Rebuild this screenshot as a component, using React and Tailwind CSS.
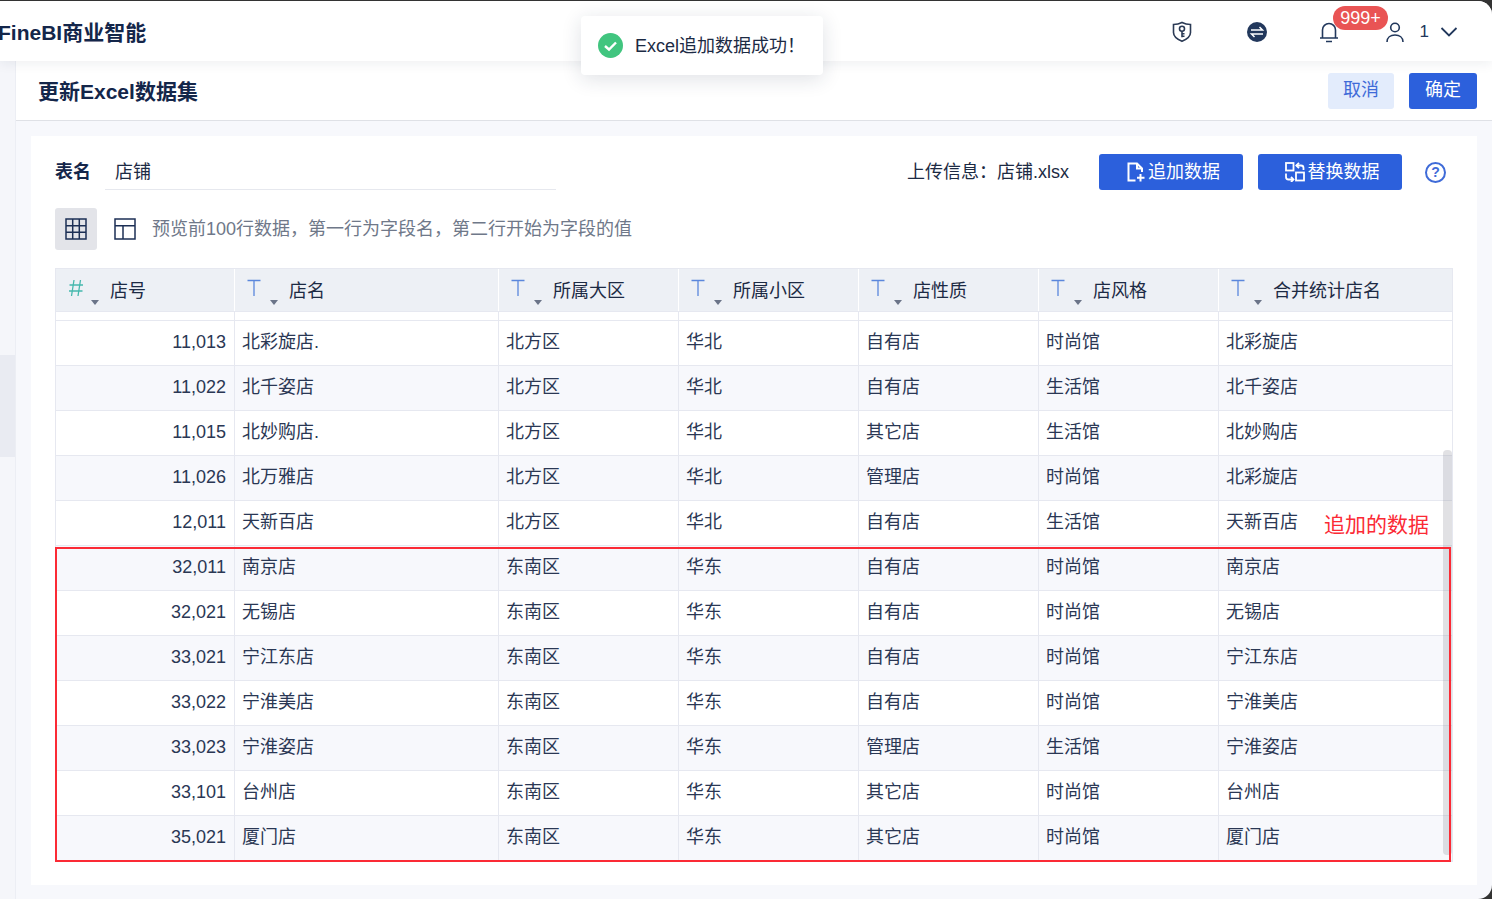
const font = "font-['Liberation_Sans','Noto_Sans_CJK_SC',sans-serif]";

const columns = [
  { name: '店号', type: 'num', width: 'w-[179px]' },
  { name: '店名', width: 'w-[264px]' },
  { name: '所属大区', width: 'w-[180px]' },
  { name: '所属小区', width: 'w-[180px]' },
  { name: '店性质', width: 'w-[180px]' },
  { name: '店风格', width: 'w-[180px]' },
  { name: '合并统计店名', width: 'flex-1' },
];

const rows = [
  ['11,013', '北彩旋店.', '北方区', '华北', '自有店', '时尚馆', '北彩旋店'],
  ['11,022', '北千姿店', '北方区', '华北', '自有店', '生活馆', '北千姿店'],
  ['11,015', '北妙购店.', '北方区', '华北', '其它店', '生活馆', '北妙购店'],
  ['11,026', '北万雅店', '北方区', '华北', '管理店', '时尚馆', '北彩旋店'],
  ['12,011', '天新百店', '北方区', '华北', '自有店', '生活馆', '天新百店'],
  ['32,011', '南京店', '东南区', '华东', '自有店', '时尚馆', '南京店'],
  ['32,021', '无锡店', '东南区', '华东', '自有店', '时尚馆', '无锡店'],
  ['33,021', '宁江东店', '东南区', '华东', '自有店', '时尚馆', '宁江东店'],
  ['33,022', '宁淮美店', '东南区', '华东', '自有店', '时尚馆', '宁淮美店'],
  ['33,023', '宁淮姿店', '东南区', '华东', '管理店', '生活馆', '宁淮姿店'],
  ['33,101', '台州店', '东南区', '华东', '其它店', '时尚馆', '台州店'],
  ['35,021', '厦门店', '东南区', '华东', '其它店', '时尚馆', '厦门店'],
];

function ShieldKey() {
  return (
    <svg width="20" height="22" viewBox="0 0 20 22" fill="none" stroke="#2b3a55" strokeWidth="1.6">
      <path d="M10 1.500c2.700 1.400 5.500 2 8.500 2v8c0 4-3.700 6.800-8.500 8.800-4.800-2-8.500-4.800-8.500-8.800v-8c3 0 5.800-.6 8.500-2z" />
      <circle cx="10" cy="7.800" r="2.500" />
      <path d="M10 10.300v6M10 12.800h2.500M10 15.300h2.500" />
    </svg>
  );
}

function SwitchCircle() {
  return (
    <svg width="20" height="20" viewBox="0 0 20 20" fill="none">
      <circle cx="10" cy="10" r="10" fill="#22385c" />
      <path d="M4 8h11.500l-3-3M16 12H4.500l3 3" stroke="#fff" strokeWidth="1.500" />
    </svg>
  );
}

function Bell() {
  return (
    <svg width="22" height="24" viewBox="0 0 22 24" fill="none" stroke="#22385c" strokeWidth="1.600">
      <path d="M2 18h18M4.500 18v-8a6.500 6.500 0 0 1 13 0v8" />
      <path d="M8 21.500h6" />
    </svg>
  );
}

function User() {
  return (
    <svg width="20" height="22" viewBox="0 0 20 22" fill="none" stroke="#22385c" strokeWidth="1.600">
      <circle cx="10" cy="6.500" r="4.300" />
      <path d="M2 21c0-4.500 3.500-7 8-7s8 2.500 8 7" />
    </svg>
  );
}

function FileAdd() {
  return (
    <svg width="20" height="20" viewBox="0 0 20 20" fill="none" stroke="#fff" strokeWidth="2">
      <path d="M9.500 18.500H2.500V1.500h8.500l5 5v3.500" />
      <path d="M11 1.500v5h5" />
      <path d="M14.500 12v7.500M11 15.700h7.500" />
    </svg>
  );
}

function Replace() {
  return (
    <svg width="20" height="20" viewBox="0 0 20 20" fill="none" stroke="#fff" strokeWidth="1.800">
      <rect x="1" y="1" width="7.500" height="7.500" />
      <rect x="11" y="10.500" width="8" height="8" />
      <path d="M1 11.500v3.500c0 1.500 1 2.500 2.500 2.500H8" />
      <path d="M6 15l2.500 2.500L6 20" />
      <path d="M11.500 3.500H16c1.500 0 2.500 1 2.500 2.500v2" />
      <path d="M14 .8l-2.700 2.700 2.700 2.700" />
    </svg>
  );
}

function GridIcon() {
  return (
    <svg width="22" height="22" viewBox="0 0 22 22" fill="none" stroke="#1c2f55" strokeWidth="1.500">
      <rect x="1" y="1" width="20" height="20" />
      <path d="M7.700 1v20M14.300 1v20M1 7.700h20M1 14.300h20" />
    </svg>
  );
}

function TableIcon() {
  return (
    <svg width="22" height="22" viewBox="0 0 22 22" fill="none" stroke="#1c2f55" strokeWidth="1.500">
      <rect x="1" y="1" width="20" height="20" />
      <path d="M1 7.700h20M9 7.700V21" />
    </svg>
  );
}

function HashIcon() {
  return (
    <svg className="absolute left-[12px] top-[10px]" width="16" height="18" viewBox="0 0 16 18" fill="none" stroke="#45b8ad" strokeWidth="1.300">
      <path d="M6 1L3.500 17M12.500 1L10 17M1.500 6H15M1 12h13.500" />
    </svg>
  );
}

function TypeIcon() {
  return (
    <svg className="absolute left-[12px] top-[10px]" width="14" height="18" viewBox="0 0 14 18" fill="none" stroke="#5b87dc" strokeWidth="1.300">
      <path d="M.5 1.500h13M7 1.500V17" />
    </svg>
  );
}

function Caret() {
  return <span className="absolute left-[35px] top-[31px] h-0 w-0 border-x-[4px] border-t-[5px] border-x-transparent border-t-[#6b7488]" />;
}

function HeaderCell({ col }) {
  return (
    <div className={`${col.width} relative flex h-[42px] shrink-0 items-center border-r border-white last:border-r-0 pl-[54px] pt-[3px] text-[18px] text-[#1c2a44]`}>
      {col.type === 'num' ? <HashIcon /> : <TypeIcon />}
      <Caret />
      {col.name}
    </div>
  );
}

function Row({ row, i }) {
  return (
    <div className={`flex h-[45px] border-b border-[#e6e8f0] ${i % 2 === 1 ? 'bg-[#f7f8fc]' : 'bg-white'}`}>
      {row.map((text, c) => (
        <div
          key={c}
          className={`${columns[c].width} flex shrink-0 items-center border-r border-[#e6e8f0] last:border-r-0 pl-[7px] pr-[8px] pb-[1px] text-[18px] text-[#2a3754] ${c === 0 ? 'justify-end' : ''}`}
        >
          {text}
        </div>
      ))}
    </div>
  );
}

export default function App() {
  return (
    <div className={`${font} relative h-[899px] w-[1492px] overflow-hidden bg-[#333333] pt-px`}>
      <div className="flex h-[898px] flex-col overflow-hidden rounded-r-[14px] bg-[#f7f8fc]">
        {/* top bar */}
        <header className="relative z-10 flex h-[60px] shrink-0 items-center bg-white shadow-[0_2px_12px_rgba(30,40,70,0.08)]">
          <div className="-ml-[2px] pt-[3px] text-[21px] font-bold text-[#14264a]">FineBI商业智能</div>
          <div className="ml-auto flex items-center pt-[1px] pr-[34px]">
            <ShieldKey />
            <span className="ml-[55px]"><SwitchCircle /></span>
            <span className="ml-[51px]"><Bell /></span>
            <span className="ml-[45px]"><User /></span>
            <span className="ml-[15px] text-[17px] text-[#22385c]">1</span>
            <svg className="ml-[11px]" width="18" height="12" viewBox="0 0 18 12" fill="none" stroke="#22385c" strokeWidth="1.800">
              <path d="M1.500 2l7.500 7.500L16.500 2" />
            </svg>
          </div>
        </header>

        <div className="flex min-h-0 flex-1">
          {/* collapsed side rail */}
          <aside className="flex w-[16px] shrink-0 flex-col border-r border-[#eceef4] bg-[#f5f6fa]">
            <div className="mt-[294px] h-[102px] bg-[#e9ebf2]" />
          </aside>

          <main className="flex min-w-0 flex-1 flex-col">
            <div className="flex h-[60px] shrink-0 items-center justify-between border-b border-[#dfe1e6] bg-white pl-[22px] pr-[15px]">
              <h1 className="pt-[3px] text-[21px] font-bold text-[#14264a]">更新Excel数据集</h1>
              <div className="flex gap-[15px]">
                <button className="h-[36px] w-[66px] rounded-[3px] bg-[#e3ecfc] text-[18px] text-[#3f6bd8]">取消</button>
                <button className="h-[36px] w-[68px] rounded-[3px] bg-[#2c60dc] text-[18px] text-white">确定</button>
              </div>
            </div>

            <div className="flex-1 px-[15px] pt-[15px]">
              <section className="h-[749px] w-[1446px] bg-white px-[24px] pt-[18px]">
                <div className="flex h-[36px] items-center">
                  <span className="w-[50px] pt-[1px] text-[18px] font-bold text-[#14264a]">表名</span>
                  <div className="flex h-[36px] w-[451px] items-center border-b border-[#e6e8ee] pl-[10px] pt-[1px] text-[18px] text-[#1c2a44]">店铺</div>
                  <span className="ml-auto pt-[1px] text-[18px] text-[#1c2a44]">上传信息：店铺.xlsx</span>
                  <button className="ml-[30px] flex h-[36px] w-[144px] items-center justify-center gap-[2px] rounded-[3px] bg-[#2c60dc] pl-[4px] text-[18px] text-white">
                    <FileAdd />追加数据
                  </button>
                  <button className="ml-[15px] flex h-[36px] w-[144px] items-center justify-center gap-[3px] rounded-[3px] bg-[#2c60dc] pl-[4px] text-[18px] text-white">
                    <Replace />替换数据
                  </button>
                  <span className="ml-[23px] mr-[7px] flex h-[21px] w-[21px] items-center justify-center rounded-full border-2 border-[#3f6bd8] text-[14px] font-bold text-[#3f6bd8]">?</span>
                </div>

                <div className="mt-[18px] flex h-[42px] items-center">
                  <span className="flex h-[42px] w-[42px] items-center justify-center rounded-[3px] bg-[#e3e4e9]"><GridIcon /></span>
                  <span className="ml-[17px]"><TableIcon /></span>
                  <span className="ml-[16px] text-[18px] text-[#6f7889]">预览前100行数据，第一行为字段名，第二行开始为字段的值</span>
                </div>

                <div className="relative mt-[18px] w-[1398px] border border-[#e6e8f0]">
                  <div className="flex bg-[#edf0f5]">
                    {columns.map((col) => (
                      <HeaderCell key={col.name} col={col} />
                    ))}
                  </div>
                  <div className="flex h-[10px] border-y border-[#e6e8f0] bg-white">
                    {columns.map((col) => (
                      <div key={col.name} className={`${col.width} shrink-0 border-r border-[#e6e8f0] last:border-r-0`} />
                    ))}
                  </div>
                  {rows.map((row, i) => (
                    <Row key={row[0]} row={row} i={i} />
                  ))}

                  {/* scrollbar */}
                  <div className="absolute right-0 top-[181px] h-[405px] w-[9px] rounded-[4px] bg-[#9a9ca6]/30" />
                  {/* annotation over the grid */}
                  <div className="absolute -left-px top-[278px] h-[315px] w-[1396px] border-2 border-[#fb2a35]" />
                  <span className="absolute right-[23px] top-[240px] text-[21px] text-[#fb2a35]">追加的数据</span>
                </div>
              </section>
            </div>
          </main>
        </div>
      </div>

      {/* badge over bell */}
      <span className="absolute left-[1333px] top-[6px] z-20 flex h-[24px] w-[55px] items-center justify-center rounded-full bg-[#e95454] text-[18px] text-white">999+</span>

      {/* toast */}
      <div className="absolute left-[581px] top-[16px] z-20 flex h-[59px] w-[242px] items-center rounded-[4px] bg-white pl-[17px] pt-[1px] text-[18px] text-[#1c2a44] shadow-[0_4px_20px_rgba(30,40,70,0.14)]">
        <svg className="-mt-[1px]" width="25" height="25" viewBox="0 0 25 25">
          <circle cx="12.500" cy="12.500" r="12.500" fill="#41c57f" />
          <path d="M7 13l4 3.500 7-7" fill="none" stroke="#fff" strokeWidth="2.400" />
        </svg>
        <span className="ml-[12px]">Excel追加数据成功！</span>
      </div>
    </div>
  );
}
